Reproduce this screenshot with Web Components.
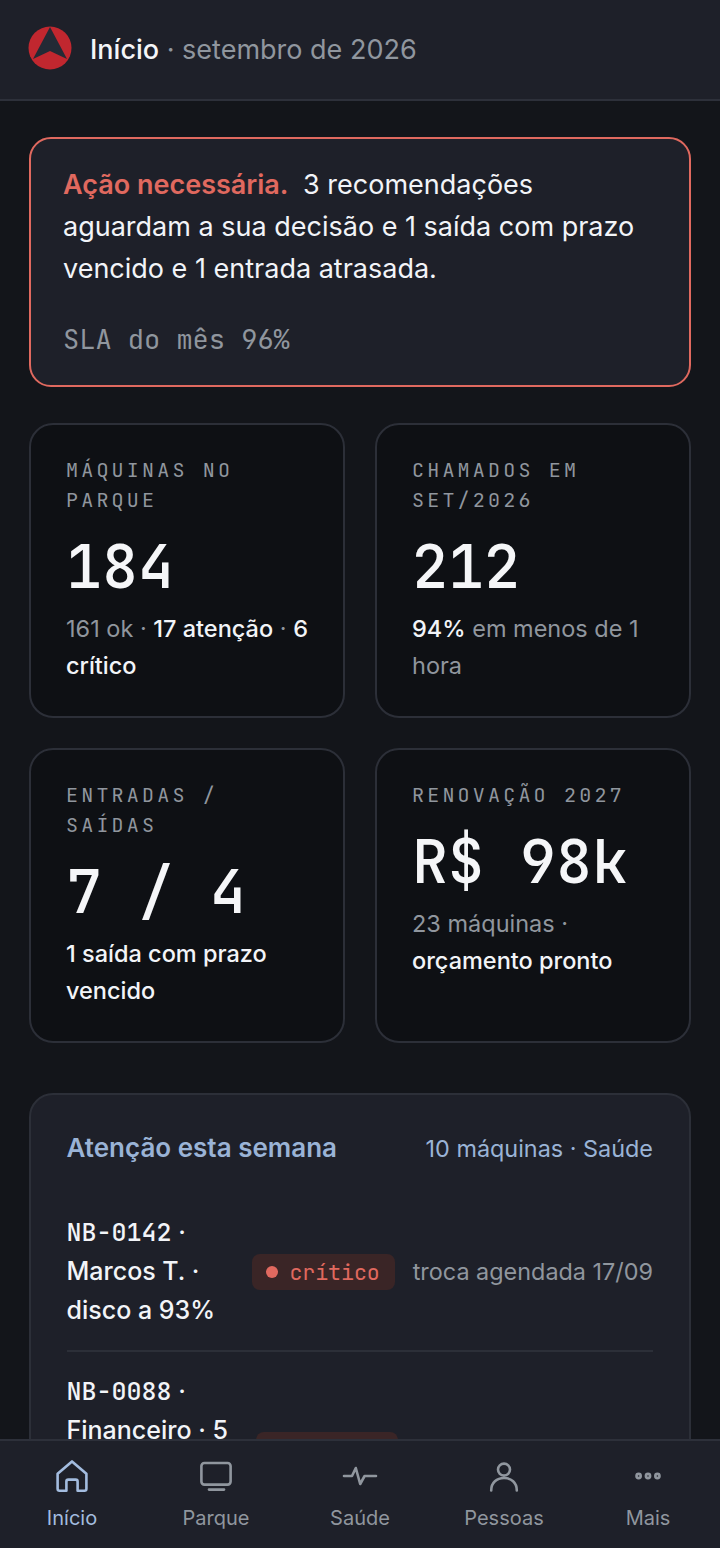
<!DOCTYPE html>
<html lang="pt-BR">
<head>
<meta charset="utf-8">
<title>Início</title>
<style>
    html,body{ margin:0; padding:0; height:100%; background:#13151a; }
    body{ font-family:Inter,"Noto Sans",sans-serif; color:#f2f4f8; }
</style>
</head>
<body>
<app-shell>
    <app-header slot="top" title="Início" sub="setembro de 2026"></app-header>

    <alert-banner note="SLA do mês 96%">
        <b slot="lead">Ação necessária.</b>
        3 recomendações aguardam a sua decisão e 1 saída com prazo vencido e 1 entrada atrasada.
    </alert-banner>

    <stat-grid>
        <stat-card label="Máquinas no parque" value="184"><span class="dim">161 ok · </span>17 atenção<span class="dim"> · </span>6 crítico</stat-card>
        <stat-card label="Chamados em set/2026" value="212">94%<span class="dim"> em menos de 1 hora</span></stat-card>
        <stat-card label="Entradas / saídas" value="7 / 4">1 saída com prazo vencido</stat-card>
        <stat-card label="Renovação 2027" value="R$ 98k"><span class="dim">23 máquinas · </span>orçamento pronto</stat-card>
    </stat-grid>

    <attention-panel heading="Atenção esta semana" link="10 máquinas · Saúde">
        <attention-row status="crítico" note="troca agendada 17/09"><code>NB-0142</code> · Marcos T. · disco a 93%</attention-row>
        <attention-row status="crítico" note="troca agendada 11/09"><code>NB-0088</code> · Financeiro · 5 dias sem backup</attention-row>
    </attention-panel>

    <bottom-nav slot="bottom">
        <nav-item icon="home" label="Início" active></nav-item>
        <nav-item icon="monitor" label="Parque"></nav-item>
        <nav-item icon="pulse" label="Saúde"></nav-item>
        <nav-item icon="person" label="Pessoas"></nav-item>
        <nav-item icon="dots" label="Mais"></nav-item>
    </bottom-nav>
</app-shell>

<script>
const MONO = `"JetBrains Mono","DejaVu Sans Mono","Liberation Mono",monospace`

const ICONS = {
    home: `<path d="M2.800 8.400 10 2.200l7.200 6.200v7.500a1 1 0 0 1-1 1h-3.400v-4.600a1 1 0 0 0-1-1H8.200a1 1 0 0 0-1 1v4.600H3.800a1 1 0 0 1-1-1z"/>`,
    monitor: `<rect x="2.700" y="3" width="14.600" height="10.800" rx="1.500"/><path d="M6.500 16.300h7.500"/>`,
    pulse: `<path d="M2 9.500h4l1.900-4 2.200 8 2.200-4H18"/>`,
    person: `<circle cx="10" cy="6.300" r="3"/><path d="M3.600 16.700c0-3.900 2.800-6.200 6.400-6.200s6.400 2.300 6.400 6.200"/>`,
    dots: `<circle cx="5.300" cy="9.500" r="1.050"/><circle cx="10" cy="9.500" r="1.050"/><circle cx="14.700" cy="9.500" r="1.050"/>`
}

class AppShell extends HTMLElement{
    constructor(){
        super()
        this.attachShadow({mode:'open'}).innerHTML=`
        <style>
            :host{ display:flex; flex-direction:column; height:100vh; overflow:hidden; }
            .main{
                flex:1;
                min-height:0;
                overflow:hidden;
                display:flex;
                flex-direction:column;
                padding:36px 29px 0;
            }
        </style>
        <slot name="top"></slot>
        <div class="main"><slot></slot></div>
        <slot name="bottom"></slot>
        `
    }
}

class AppHeader extends HTMLElement{
    constructor(){
        super()
        this.attachShadow({mode:'open'}).innerHTML=`
        <style>
            :host{
                display:flex;
                flex:none;
                align-items:center;
                gap:18px;
                box-sizing:border-box;
                height:101px;
                padding:0 28px;
                background:#1e2029;
                border-bottom:2px solid #2d303a;
                font-size:27px;
            }
            svg{ width:44px; height:44px; flex:none; margin-top:-3px; }
            b{ font-weight:500; color:#f5f6f8; }
            span{ color:#90969e; }
        </style>
        <svg viewBox="0 0 44 44">
            <circle cx="22" cy="22" r="21.500" fill="#c1272f"/>
            <path d="M22 1 5 33 22 25 39 33z" fill="#232a35"/>
        </svg>
        <div><b>${this.getAttribute('title')}</b><span> · ${this.getAttribute('sub')}</span></div>
        `
    }
}

class AlertBanner extends HTMLElement{
    constructor(){
        super()
        this.attachShadow({mode:'open'}).innerHTML=`
        <style>
            :host{
                display:block;
                flex:none;
                box-sizing:border-box;
                height:250px;
                padding:25px 32px;
                background:#1e2029;
                border:2px solid #e0695f;
                border-radius:22px;
                font-size:27px;
                line-height:42px;
            }
            ::slotted(b){ color:#e0695f; font-weight:600; margin-right:7px; }
            .note{
                margin-top:29px;
                font-family:${MONO};
                font-size:27px;
                line-height:40px;
                color:#90969e;
            }
        </style>
        <div><slot name="lead"></slot><slot></slot></div>
        <div class="note">${this.getAttribute('note')}</div>
        `
    }
}

class StatGrid extends HTMLElement{
    constructor(){
        super()
        this.attachShadow({mode:'open'}).innerHTML=`
        <style>
            :host{
                display:grid;
                flex:none;
                grid-template-columns:1fr 1fr;
                grid-auto-rows:295px;
                gap:30px;
                margin:36px 0 50px;
            }
        </style>
        <slot></slot>
        `
    }
}

class StatCard extends HTMLElement{
    constructor(){
        super()
        this.attachShadow({mode:'open'}).innerHTML=`
        <style>
            :host{
                display:block;
                box-sizing:border-box;
                padding:30px 34px 30px 35px;
                background:#0e1014;
                border:2px solid #2c2f38;
                border-radius:24px;
                font-size:23.500px;
                line-height:37px;
                font-weight:500;
                color:#f2f4f8;
            }
            .label{
                font-family:${MONO};
                font-size:20px;
                font-weight:400;
                line-height:30px;
                letter-spacing:3.200px;
                text-transform:uppercase;
                color:#90969e;
            }
            .value{
                margin:13px 0 4px;
                font-family:${MONO};
                font-size:60px;
                font-weight:500;
                line-height:78px;
                white-space:pre-wrap;
                color:#f5f6f8;
            }
            ::slotted(.dim){ color:#90969e; font-weight:400; }
        </style>
        <div class="label">${this.getAttribute('label')}</div>
        <div class="value">${this.getAttribute('value')}</div>
        <div><slot></slot></div>
        `
    }
}

class AttentionPanel extends HTMLElement{
    constructor(){
        super()
        this.attachShadow({mode:'open'}).innerHTML=`
        <style>
            :host{
                display:block;
                flex:none;
                box-sizing:border-box;
                padding:33px 36px 33px 35.500px;
                background:#1e2029;
                border:2px solid #2c2f38;
                border-radius:24px;
            }
            .head{
                display:flex;
                justify-content:space-between;
                align-items:center;
                margin-bottom:45px;
                color:#9ab3d6;
            }
            h2{ margin:0; font-size:26px; line-height:40px; font-weight:600; }
            span{ font-size:23.400px; }
        </style>
        <div class="head"><h2>${this.getAttribute('heading')}</h2><span>${this.getAttribute('link')}</span></div>
        <slot></slot>
        `
    }
}

class AttentionRow extends HTMLElement{
    constructor(){
        super()
        this.attachShadow({mode:'open'}).innerHTML=`
        <style>
            :host{
                display:flex;
                align-items:center;
                gap:18px;
                padding:0 0 20px;
                margin-bottom:20px;
                border-bottom:2px solid #2c2f38;
            }
            .text{ flex:1; min-width:0; font-size:25px; font-weight:500; line-height:39px; color:#f2f4f8; }
            ::slotted(code){ font-family:${MONO}; font-size:25px; }
            .note{ flex:none; font-size:23.400px; color:#90969e; white-space:nowrap; }
        </style>
        <div class="text"><slot></slot></div>
        <status-pill>${this.getAttribute('status')}</status-pill>
        <div class="note">${this.getAttribute('note')}</div>
        `
    }
}

class StatusPill extends HTMLElement{
    constructor(){
        super()
        this.attachShadow({mode:'open'}).innerHTML=`
        <style>
            :host{
                display:inline-flex;
                flex:none;
                align-items:center;
                gap:11px;
                box-sizing:border-box;
                height:36px;
                padding:0 15px 0 14px;
                background:#3a2526;
                border-radius:8px;
                font-family:${MONO};
                font-size:21.500px;
                color:#e0695f;
            }
            i{ width:12px; height:12px; border-radius:50%; background:#e0695f; }
        </style>
        <i></i><slot></slot>
        `
    }
}

class BottomNav extends HTMLElement{
    constructor(){
        super()
        this.attachShadow({mode:'open'}).innerHTML=`
        <style>
            :host{
                display:grid;
                flex:none;
                grid-template-columns:repeat(5,1fr);
                box-sizing:border-box;
                height:109px;
                padding-top:16px;
                background:#1e2029;
                border-top:2px solid #2d303a;
            }
        </style>
        <slot></slot>
        `
    }
}

class NavItem extends HTMLElement{
    constructor(){
        super()
        const on = this.hasAttribute('active')
        this.attachShadow({mode:'open'}).innerHTML=`
        <style>
            :host{
                display:flex;
                flex-direction:column;
                align-items:center;
                gap:6px;
                font-size:20px;
                line-height:30px;
                color:${on ? '#a3bcdf' : '#90969e'};
            }
            svg{ width:40px; height:40px; fill:none; stroke:currentColor; stroke-width:1.300; stroke-linecap:round; stroke-linejoin:round; }
        </style>
        <svg viewBox="0 0 20 20">${ICONS[this.getAttribute('icon')]}</svg>
        <div>${this.getAttribute('label')}</div>
        `
    }
}

customElements.define('app-shell',AppShell)
customElements.define('app-header',AppHeader)
customElements.define('alert-banner',AlertBanner)
customElements.define('stat-grid',StatGrid)
customElements.define('stat-card',StatCard)
customElements.define('attention-panel',AttentionPanel)
customElements.define('attention-row',AttentionRow)
customElements.define('status-pill',StatusPill)
customElements.define('bottom-nav',BottomNav)
customElements.define('nav-item',NavItem)
</script>
</body>
</html>
